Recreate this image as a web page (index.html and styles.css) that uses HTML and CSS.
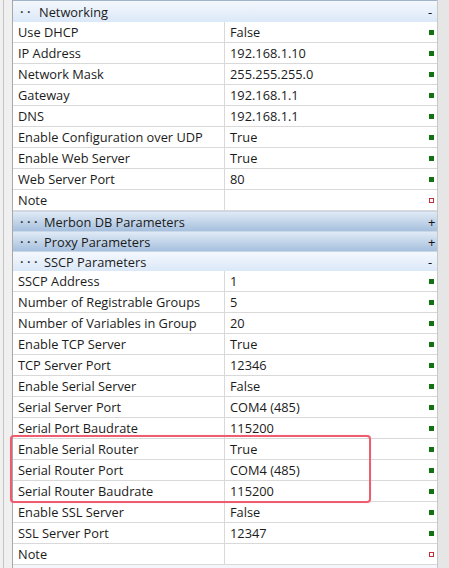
FILE: index.html
```html
<!DOCTYPE html>
<html>
<head>
<meta charset="utf-8">
<link rel="stylesheet" href="styles.css">
</head>
<body>
<div class="frame">
  <div class="gutter"></div>
  <div class="grid">
    <div class="cat open first"><span class="dots">· ·</span><span class="cat-name">Networking</span><span class="toggle">-</span></div>
    <div class="row"><div class="name">Use DHCP</div><div class="value"><span>False</span><i class="ind"></i></div></div>
    <div class="row"><div class="name">IP Address</div><div class="value"><span>192.168.1.10</span><i class="ind"></i></div></div>
    <div class="row"><div class="name">Network Mask</div><div class="value"><span>255.255.255.0</span><i class="ind"></i></div></div>
    <div class="row"><div class="name">Gateway</div><div class="value"><span>192.168.1.1</span><i class="ind"></i></div></div>
    <div class="row"><div class="name">DNS</div><div class="value"><span>192.168.1.1</span><i class="ind"></i></div></div>
    <div class="row"><div class="name">Enable Configuration over UDP</div><div class="value"><span>True</span><i class="ind"></i></div></div>
    <div class="row"><div class="name">Enable Web Server</div><div class="value"><span>True</span><i class="ind"></i></div></div>
    <div class="row"><div class="name">Web Server Port</div><div class="value"><span>80</span><i class="ind"></i></div></div>
    <div class="row"><div class="name">Note</div><div class="value"><span></span><i class="ind empty"></i></div></div>
    <div class="cat closed"><span class="dots">· · ·</span><span class="cat-name">Merbon DB Parameters</span><span class="toggle">+</span></div>
    <div class="cat closed"><span class="dots">· · ·</span><span class="cat-name">Proxy Parameters</span><span class="toggle">+</span></div>
    <div class="cat open"><span class="dots">· · ·</span><span class="cat-name">SSCP Parameters</span><span class="toggle">-</span></div>
    <div class="row"><div class="name">SSCP Address</div><div class="value"><span>1</span><i class="ind"></i></div></div>
    <div class="row"><div class="name">Number of Registrable Groups</div><div class="value"><span>5</span><i class="ind"></i></div></div>
    <div class="row"><div class="name">Number of Variables in Group</div><div class="value"><span>20</span><i class="ind"></i></div></div>
    <div class="row"><div class="name">Enable TCP Server</div><div class="value"><span>True</span><i class="ind"></i></div></div>
    <div class="row"><div class="name">TCP Server Port</div><div class="value"><span>12346</span><i class="ind"></i></div></div>
    <div class="row"><div class="name">Enable Serial Server</div><div class="value"><span>False</span><i class="ind"></i></div></div>
    <div class="row"><div class="name">Serial Server Port</div><div class="value"><span>COM4 (485)</span><i class="ind"></i></div></div>
    <div class="row"><div class="name">Serial Port Baudrate</div><div class="value"><span>115200</span><i class="ind"></i></div></div>
    <div class="row"><div class="name">Enable Serial Router</div><div class="value"><span>True</span><i class="ind"></i></div></div>
    <div class="row"><div class="name">Serial Router Port</div><div class="value"><span>COM4 (485)</span><i class="ind"></i></div></div>
    <div class="row"><div class="name">Serial Router Baudrate</div><div class="value"><span>115200</span><i class="ind"></i></div></div>
    <div class="row"><div class="name">Enable SSL Server</div><div class="value"><span>False</span><i class="ind"></i></div></div>
    <div class="row"><div class="name">SSL Server Port</div><div class="value"><span>12347</span><i class="ind"></i></div></div>
    <div class="row"><div class="name">Note</div><div class="value"><span></span><i class="ind empty"></i></div></div>
    <div class="highlight"></div>
  </div>
  <div class="scrollbar"></div>
</div>
</body>
</html>
```
FILE: styles.css
```css
html, body {
  margin: 0;
  padding: 0;
  background: #f0f0f0;
}
body {
  font-family: "Open Sans", "Noto Sans", sans-serif;
  font-size: 12.8px;
  color: #1b1b1b;
  width: 449px;
  height: 568px;
  overflow: hidden;
}
.frame {
  display: flex;
  height: 568px;
}
.gutter {
  width: 8px;
  border-left: 1px solid #c4c4c4;
  margin-left: 3px;
  background: #f0f0f0;
  border-right: 1px solid #a8a8a8;
  flex: none;
}
.grid {
  position: relative;
  width: 424px;
  flex: none;
  background: #f3f6fa;
  border-right: 1px solid #c8c8c8;
}
.scrollbar {
  flex: 1;
  background: #e6e6e6;
}
.cat {
  height: 19px;
  display: flex;
  align-items: center;
  border-top: 1px solid #c9d8e9;
  color: #1b1b1b;
}
.cat.first {
  height: 21px;
  border-top-color: #9fb4cc;
}
.cat.open {
  background: linear-gradient(#f4f8fd, #dbe8f8);
}
.cat.closed {
  background: linear-gradient(#e0eaf5, #a6c0de);
}
.dots {
  width: 24px;
  padding-left: 7px;
  color: #2a2a2a;
  white-space: nowrap;
  font-size: 13px;
  font-weight: 600;
}
.cat.first .dots {
  width: 19px;
}
.cat-name {
  flex: 1;
}
.toggle {
  width: 9px;
  font-size: 13px;
  color: #111;
}
.row {
  display: grid;
  grid-template-columns: 212px 1fr;
  height: 20px;
  background: #fff;
  border-bottom: 1px solid #d9d9d9;
}
.name {
  padding-left: 5px;
  line-height: 20px;
  border-right: 1px solid #d9d9d9;
  white-space: nowrap;
  overflow: hidden;
}
.value {
  padding-left: 5px;
  padding-right: 3px;
  display: flex;
  align-items: center;
  justify-content: space-between;
  line-height: 20px;
}
.ind {
  display: block;
  width: 5px;
  height: 5px;
  background: #137013;
}
.ind.empty {
  width: 3px;
  height: 3px;
  background: #fff;
  border: 1px solid #c42e3a;
}
.highlight {
  position: absolute;
  left: -3px;
  top: 435px;
  width: 357px;
  height: 64px;
  border: 2px solid #ec5d70;
  border-radius: 4px;
  box-shadow: 0 0 1px #f4a0aa;
}
```
